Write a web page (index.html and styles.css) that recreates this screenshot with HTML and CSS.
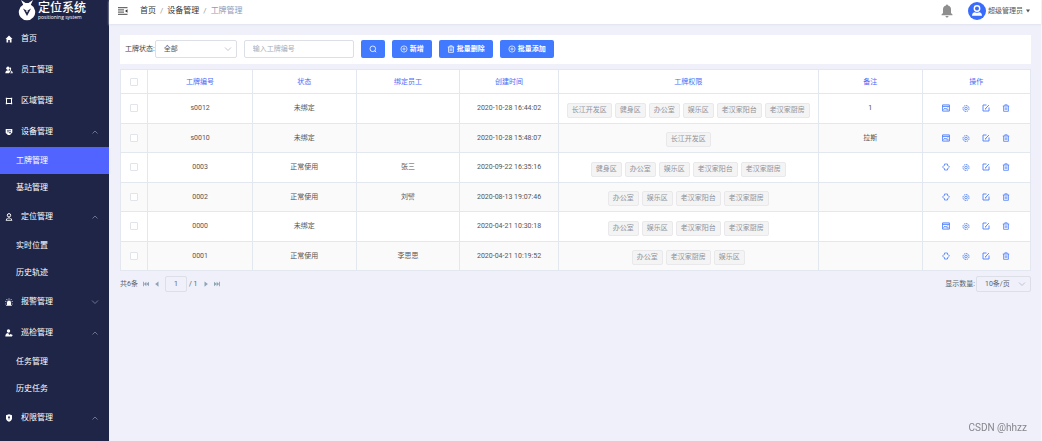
FILE: index.html
```html
<!DOCTYPE html>
<html lang="zh-CN">
<head>
<meta charset="utf-8">
<meta name="viewport" content="width=device-width, initial-scale=1">
<title>工牌管理</title>
<link rel="stylesheet" href="styles.css">
</head>
<body>
<svg class="sprite" aria-hidden="true">
  <symbol id="up" viewBox="0 0 8 8"><path d="M1.500 5.500 4 3l2.500 2.500" fill="none" stroke="currentColor" stroke-width=".8"/></symbol>
  <symbol id="down" viewBox="0 0 8 8"><path d="M1 2.500 4 5.500 7 2.500" fill="none" stroke="currentColor" stroke-width=".8"/></symbol>
  <symbol id="home" viewBox="0 0 8 8"><path d="M4 .5.500 4H1.500v3.500H3.200V5h1.600v2.500h1.700V4h1z" fill="currentColor"/></symbol>
  <symbol id="users" viewBox="0 0 8 8"><circle cx="3" cy="2.300" r="1.700" fill="currentColor"/><path d="M.3 7.300c0-2 1.200-3 2.700-3s2 .5 2.300 1.200L4 7.300zM5 1.200a1.600 1.600 0 0 1 .4 2.900L7.700 6 7 6.500 5 4.600zM5 7.300l1-1h1.700v1z" fill="currentColor"/></symbol>
  <symbol id="area" viewBox="0 0 8 8"><path d="M1.500 1.500h5v5h-5z" fill="none" stroke="currentColor"/><path d="M.8.800h1.400v1.400H.8zM5.800.800h1.400v1.400H5.800zM.8 5.800h1.400v1.400H.8zM5.800 5.800h1.400v1.400H5.800z" fill="currentColor"/></symbol>
  <symbol id="device" viewBox="0 0 8 8"><path d="M.7 1h6.600v3.500L5 7H3L.7 5z" fill="currentColor"/><path d="M2 2.400h4M2 3.800h2M5 3.400v2.200M4 4.500h2" stroke="#1f2547" stroke-width=".6"/></symbol>
  <symbol id="pin" viewBox="0 0 8 8"><circle cx="4" cy="2.300" r="1.700" fill="none" stroke="currentColor"/><path d="M4 4v2M2.500 5 1 7.300h6L5.500 5" fill="none" stroke="currentColor" stroke-width=".9"/></symbol>
  <symbol id="alarm" viewBox="0 0 8 8"><path d="M2 7V4.500a2 2 0 0 1 4 0V7h.8v.8H1.200V7z" fill="currentColor"/><path d="M4 .3v1.500M1.500 1l.8 1.200M6.500 1l-.8 1.200M.2 3.300l1.300.5M7.800 3.300l-1.300.5M.3 6h1M6.700 6h1" stroke="currentColor" stroke-width=".7"/></symbol>
  <symbol id="patrol" viewBox="0 0 8 8"><circle cx="3.500" cy="2" r="1.700" fill="currentColor"/><path d="M.3 7.500C.3 5 1.700 4 3.200 4l1 2 1.300-.9 2.200 1-.8 1.400z" fill="currentColor"/></symbol>
  <symbol id="shield" viewBox="0 0 8 8"><path d="M4 .3 7 1.300v3C7 6 5.500 7.200 4 7.800 2.500 7.200 1 6 1 4.300v-3z" fill="currentColor"/><circle cx="4" cy="3.200" r=".9" fill="#1f2547"/><path d="M4 3.500v2" stroke="#1f2547" stroke-width=".7"/></symbol>
  <symbol id="search" viewBox="0 0 8 8"><circle cx="3.800" cy="3.800" r="2.800" fill="none" stroke="currentColor" stroke-width=".8"/><path d="M5.800 5.800 7.200 7.200" stroke="currentColor" stroke-width=".8"/></symbol>
  <symbol id="plus" viewBox="0 0 8 8"><circle cx="4" cy="4" r="3.100" fill="none" stroke="currentColor" stroke-width=".7"/><path d="M4 2.400v3.200M2.400 4h3.200" stroke="currentColor" stroke-width=".7"/></symbol>
  <symbol id="trash" viewBox="0 0 8 8"><path d="M.8 2h6.400M2.800 1.800V.8h2.400v1M1.600 2v5.300h4.800V2M3.200 3.300v2.700M4.800 3.300v2.700" fill="none" stroke="currentColor" stroke-width=".8"/></symbol>
  <symbol id="card" viewBox="0 0 8 8"><path d="M.6.900h6.800v6.200H.6zM.6 2.400h6.800M1.600 5.800l1.300-1.700 1.200 1.200 1.500-1.700M4.700 5.800h1.800" fill="none" stroke="currentColor" stroke-width=".9"/></symbol>
  <symbol id="unbind" viewBox="0 0 8 8"><path d="M2.500 2.600V1h3v1.600M2.500 5.400V7h3V5.400M2.300 2.200.5 4l1.800 1.800M5.700 2.200 7.500 4 5.700 5.800" fill="none" stroke="currentColor" stroke-width=".8"/></symbol>
  <symbol id="gear" viewBox="0 0 8 8"><circle cx="4" cy="4.500" r="3" fill="none" stroke="currentColor" stroke-width=".9" stroke-dasharray="1.600 .7"/><circle cx="4" cy="4.500" r="1.300" fill="none" stroke="currentColor" stroke-width=".8"/></symbol>
  <symbol id="edit" viewBox="0 0 8 8"><path d="M4.500 1H1v6h6V3.500M3.300 4.800 6.900 1.100M3 5.100l1.300-.4" fill="none" stroke="currentColor" stroke-width=".9"/></symbol>
  <symbol id="first" viewBox="0 0 8 8"><path d="M0 1h1.200v6H0zM4.500 1v6L1.200 4zM8 1v6L4.500 4z" fill="currentColor"/></symbol>
  <symbol id="prev" viewBox="0 0 8 8"><path d="M6 .5v7L1.500 4z" fill="currentColor"/></symbol>
  <symbol id="next" viewBox="0 0 8 8"><path d="M2 .5v7L6.500 4z" fill="currentColor"/></symbol>
  <symbol id="last" viewBox="0 0 8 8"><path d="M6.800 1H8v6H6.800zM3.500 1v6l3.300-3zM0 1v6l3.500-3z" fill="currentColor"/></symbol>
</svg>

<div class="app">
  <aside class="sidebar">
    <div class="brand">
      <svg class="brand-mark" viewBox="0 0 18 21"><path d="M3 0 5.200 4.800a8.200 8.200 0 1 0 7.600 0L15 0 10.500 3h-3z" fill="#fff"/><path d="M5 8.500 9 16l4-7.500-2.500 1.500h-3z" fill="#1f2547"/><path d="M7.700 10.200 9 12.500l1.300-2.300z" fill="#fff"/></svg>
      <div class="brand-text"><strong class="brand-name">定位系统</strong><span class="brand-sub">positioning system</span></div>
    </div>
    <nav class="menu">
      <a class="item" href="#"><svg class="icon"><use href="#home"/></svg>首页</a>
      <a class="item" href="#"><svg class="icon"><use href="#users"/></svg>员工管理</a>
      <a class="item" href="#"><svg class="icon"><use href="#area"/></svg>区域管理</a>
      <a class="item" href="#"><svg class="icon"><use href="#device"/></svg>设备管理<svg class="icon arrow"><use href="#up"/></svg></a>
      <a class="sub active" href="#">工牌管理</a>
      <a class="sub" href="#">基站管理</a>
      <a class="item" href="#"><svg class="icon"><use href="#pin"/></svg>定位管理<svg class="icon arrow"><use href="#up"/></svg></a>
      <a class="sub" href="#">实时位置</a>
      <a class="sub" href="#">历史轨迹</a>
      <a class="item" href="#"><svg class="icon"><use href="#alarm"/></svg>报警管理<svg class="icon arrow"><use href="#down"/></svg></a>
      <a class="item" href="#"><svg class="icon"><use href="#patrol"/></svg>巡检管理<svg class="icon arrow"><use href="#up"/></svg></a>
      <a class="sub" href="#">任务管理</a>
      <a class="sub" href="#">历史任务</a>
      <a class="item" href="#"><svg class="icon"><use href="#shield"/></svg>权限管理<svg class="icon arrow"><use href="#up"/></svg></a>
    </nav>
  </aside>

  <div class="page">
    <header class="topbar">
      <button class="fold" aria-label="折叠菜单"><svg viewBox="0 0 10 8"><path d="M0 .7h9.500M0 2.900h6M0 5.100h6M0 7.300h9.500" stroke="#333" stroke-width=".9"/><path d="M9.500 2.200v3.600L7 4z" fill="#333"/></svg></button>
      <nav class="crumbs"><a class="crumb" href="#">首页</a><span class="slash">/</span><a class="crumb" href="#">设备管理</a><span class="slash">/</span><span class="here">工牌管理</span></nav>
      <button class="bell" aria-label="通知"><svg viewBox="0 0 12 14"><path d="M6 .5a1 1 0 0 1 1 1A4 4 0 0 1 10 5.500V9l1.500 1.500v.8H.5v-.8L2 9V5.500a4 4 0 0 1 3-4 1 1 0 0 1 1-1zM4.500 12h3a1.500 1.500 0 0 1-3 0z" fill="#8e8e8e"/></svg></button>
      <button class="user"><svg class="avatar" viewBox="0 0 18 18"><circle cx="9" cy="9" r="9" fill="#3a6cfb"/><circle cx="9" cy="6.500" r="2.700" fill="none" stroke="#fff" stroke-width="1.400"/><path d="M4 13.800c0-2.500 1.500-3.600 3-3.600 1.200.8 2.800.8 4 0 1.500 0 3 1.100 3 3.600z" fill="#fff"/></svg>超级管理员<svg class="caret" viewBox="0 0 6 6"><path d="M1 1.500h4L3 4.500z" fill="#555"/></svg></button>
    </header>

    <main class="content">
      <form class="toolbar">
        <label class="label" for="status">工牌状态:</label>
        <span class="pick pick-status"><select class="field" id="status"><option>全部</option></select><svg class="pick-arrow"><use href="#down"/></svg></span>
        <input class="field keyword" type="text" placeholder="输入工牌编号" aria-label="工牌编号">
        <button class="btn" type="button" aria-label="搜索"><svg class="icon"><use href="#search"/></svg></button>
        <button class="btn" type="button"><svg class="icon"><use href="#plus"/></svg>新增</button>
        <button class="btn" type="button"><svg class="icon"><use href="#trash"/></svg>批量删除</button>
        <button class="btn" type="button"><svg class="icon"><use href="#plus"/></svg>批量添加</button>
      </form>

      <table class="grid">
        <colgroup><col class="c-check"><col class="c-no"><col class="c-mid"><col class="c-mid"><col class="c-time"><col class="c-auth"><col class="c-mid"><col class="c-ops"></colgroup>
        <thead>
          <tr><th><input class="tick" type="checkbox" aria-label="全选"></th><th>工牌编号</th><th>状态</th><th>绑定员工</th><th>创建时间</th><th>工牌权限</th><th>备注</th><th>操作</th></tr>
        </thead>
        <tbody>
          <tr><td><input class="tick" type="checkbox" aria-label="选择 s0012"></td><td>s0012</td><td>未绑定</td><td></td><td>2020-10-28 16:44:02</td>
            <td><div class="tags"><span class="tag">长江开发区</span><span class="tag">健身区</span><span class="tag">办公室</span><span class="tag">娱乐区</span><span class="tag">老汉家阳台</span><span class="tag">老汉家厨房</span></div></td><td>1</td>
            <td><div class="ops"><button class="op" aria-label="绑定"><svg class="icon"><use href="#card"/></svg></button><button class="op" aria-label="设置"><svg class="icon"><use href="#gear"/></svg></button><button class="op" aria-label="编辑"><svg class="icon"><use href="#edit"/></svg></button><button class="op" aria-label="删除"><svg class="icon"><use href="#trash"/></svg></button></div></td></tr>
          <tr><td><input class="tick" type="checkbox" aria-label="选择 s0010"></td><td>s0010</td><td>未绑定</td><td></td><td>2020-10-28 15:48:07</td>
            <td><div class="tags"><span class="tag">长江开发区</span></div></td><td>拉斯</td>
            <td><div class="ops"><button class="op" aria-label="绑定"><svg class="icon"><use href="#card"/></svg></button><button class="op" aria-label="设置"><svg class="icon"><use href="#gear"/></svg></button><button class="op" aria-label="编辑"><svg class="icon"><use href="#edit"/></svg></button><button class="op" aria-label="删除"><svg class="icon"><use href="#trash"/></svg></button></div></td></tr>
          <tr><td><input class="tick" type="checkbox" aria-label="选择 0003"></td><td>0003</td><td>正常使用</td><td>张三</td><td>2020-09-22 16:35:16</td>
            <td><div class="tags"><span class="tag">健身区</span><span class="tag">办公室</span><span class="tag">娱乐区</span><span class="tag">老汉家阳台</span><span class="tag">老汉家厨房</span></div></td><td></td>
            <td><div class="ops"><button class="op" aria-label="解绑"><svg class="icon"><use href="#unbind"/></svg></button><button class="op" aria-label="设置"><svg class="icon"><use href="#gear"/></svg></button><button class="op" aria-label="编辑"><svg class="icon"><use href="#edit"/></svg></button><button class="op" aria-label="删除"><svg class="icon"><use href="#trash"/></svg></button></div></td></tr>
          <tr><td><input class="tick" type="checkbox" aria-label="选择 0002"></td><td>0002</td><td>正常使用</td><td>刘譬</td><td>2020-08-13 19:07:46</td>
            <td><div class="tags"><span class="tag">办公室</span><span class="tag">娱乐区</span><span class="tag">老汉家阳台</span><span class="tag">老汉家厨房</span></div></td><td></td>
            <td><div class="ops"><button class="op" aria-label="解绑"><svg class="icon"><use href="#unbind"/></svg></button><button class="op" aria-label="设置"><svg class="icon"><use href="#gear"/></svg></button><button class="op" aria-label="编辑"><svg class="icon"><use href="#edit"/></svg></button><button class="op" aria-label="删除"><svg class="icon"><use href="#trash"/></svg></button></div></td></tr>
          <tr><td><input class="tick" type="checkbox" aria-label="选择 0000"></td><td>0000</td><td>未绑定</td><td></td><td>2020-04-21 10:30:18</td>
            <td><div class="tags"><span class="tag">办公室</span><span class="tag">娱乐区</span><span class="tag">老汉家阳台</span><span class="tag">老汉家厨房</span></div></td><td></td>
            <td><div class="ops"><button class="op" aria-label="绑定"><svg class="icon"><use href="#card"/></svg></button><button class="op" aria-label="设置"><svg class="icon"><use href="#gear"/></svg></button><button class="op" aria-label="编辑"><svg class="icon"><use href="#edit"/></svg></button><button class="op" aria-label="删除"><svg class="icon"><use href="#trash"/></svg></button></div></td></tr>
          <tr><td><input class="tick" type="checkbox" aria-label="选择 0001"></td><td>0001</td><td>正常使用</td><td>李思思</td><td>2020-04-21 10:19:52</td>
            <td><div class="tags"><span class="tag">办公室</span><span class="tag">老汉家厨房</span><span class="tag">娱乐区</span></div></td><td></td>
            <td><div class="ops"><button class="op" aria-label="解绑"><svg class="icon"><use href="#unbind"/></svg></button><button class="op" aria-label="设置"><svg class="icon"><use href="#gear"/></svg></button><button class="op" aria-label="编辑"><svg class="icon"><use href="#edit"/></svg></button><button class="op" aria-label="删除"><svg class="icon"><use href="#trash"/></svg></button></div></td></tr>
        </tbody>
      </table>

      <footer class="pager">
        <span>共6条</span>
        <button class="jump" aria-label="首页"><svg class="icon"><use href="#first"/></svg></button>
        <button class="jump" aria-label="上一页"><svg class="icon"><use href="#prev"/></svg></button>
        <span class="where"><input class="field page-no" type="text" value="1" aria-label="页码">/ 1</span>
        <button class="jump" aria-label="下一页"><svg class="icon"><use href="#next"/></svg></button>
        <button class="jump" aria-label="末页"><svg class="icon"><use href="#last"/></svg></button>
        <label class="size-label" for="size">显示数量:</label>
        <span class="pick pick-size"><select class="field" id="size"><option>10条/页</option></select><svg class="pick-arrow"><use href="#down"/></svg></span>
      </footer>
    </main>
  </div>
</div>
<div class="watermark">CSDN @hhzz</div>
</body>
</html>
```
FILE: styles.css
```css
* { box-sizing: border-box; }
body {
  margin: 0;
  background: #eff0fa;
  color: #555;
  font: 7px/10px Roboto, "Noto Sans CJK SC", sans-serif;
}
button, input, select { font: inherit; color: inherit; margin: 0; }
button { border: 0; padding: 0; background: none; cursor: pointer; }
a { color: inherit; text-decoration: none; }
svg { display: block; flex: none; }
.sprite { position: absolute; width: 0; height: 0; }
.icon { width: 8px; height: 8px; }

.app { display: flex; min-height: 100vh; }
.sidebar { flex: none; width: 109px; background: #1f2547; color: #fff; }
.brand { display: flex; gap: 2px; height: 23px; padding-left: 18px; }
.brand-mark { width: 18px; height: 21px; }
.brand-text { display: flex; flex-direction: column; padding-top: 1px; }
.brand-name { font-size: 12px; line-height: 14px; font-weight: 500; }
.brand-sub { font-family: "Open Sans", sans-serif; font-size: 5px; line-height: 5px; white-space: nowrap; }
.item, .sub { display: flex; align-items: center; font-size: 8px; }
.item { height: 31px; padding: 0 10px 0 5px; gap: 8px; }
.sub { height: 27px; padding-left: 16px; }
.active { background: #5264ff; }
.arrow { margin-left: auto; color: #8087a0; }

.page { flex: 1; min-width: 0; border-right: 1px solid #f5f5fb; }
.topbar { display: flex; align-items: center; height: 24px; padding: 0 10px 3px 9px; background: #fff; box-shadow: 0 1px 2px #dfe3ee; }
.fold svg { width: 10px; height: 8px; }
.crumbs { display: flex; gap: 4px; margin: 0 auto 0 12px; font-size: 8px; color: #333; }
.slash { color: #999; }
.here { color: #8f9bb8; }
.bell svg { width: 12px; height: 14px; }
.user { display: flex; align-items: center; gap: 2px; margin-left: 15px; }
.avatar { width: 18px; height: 18px; }
.caret { width: 6px; height: 6px; }

.content { display: flex; flex-direction: column; padding: 11px 10px 11px 11px; }
.toolbar { display: flex; align-items: center; gap: 7px; height: 29px; padding: 0 5px 1px; background: #fff; }
.label { margin-right: -7px; color: #444; white-space: nowrap; }
.pick { position: relative; display: block; }
.pick-status { width: 82px; }
.pick-size { width: 55px; }
.pick-arrow { position: absolute; right: 5px; top: 50%; width: 8px; height: 8px; margin-top: -4px; color: #b3b9c6; pointer-events: none; }
.field { display: block; width: 100%; height: 18px; padding: 0 8px; border: 1px solid #dcdfe6; border-radius: 2px; background: #fff; outline: 0; appearance: none; }
.keyword { width: 110px; }
.keyword::placeholder { color: #a9adb8; }
.btn { display: flex; align-items: center; gap: 2px; height: 18px; padding: 0 8px; border-radius: 2px; background: #4179ff; color: #fff; font-weight: 700; white-space: nowrap; }

.grid { width: 100%; margin-top: 5px; border-collapse: collapse; table-layout: fixed; background: #fff; text-align: center; }
.c-check { width: 3%; }
.c-no { width: 11.500%; }
.c-mid { width: 11.400%; }
.c-time { width: 10.800%; }
.c-auth { width: 28.600%; }
.c-ops { width: 11.900%; }
.grid th, .grid td { height: 30px; padding: 0; border: 1px solid #e3e7ef; vertical-align: middle; }
.grid td { padding-bottom: 1px; }
.grid th { height: 24px; color: #4a6cf7; font-weight: 400; }
.grid tbody tr:nth-child(even) { background: #fafafa; }
.grid tbody tr:nth-child(even) td { height: 29px; }
.tick { display: block; width: 8px; height: 8px; margin: 0 auto; border: 1px solid #e1e4ea; border-radius: 1px; background: #fff; appearance: none; }
.tags { display: flex; justify-content: center; gap: 3px; padding-top: 4px; }
.tag { height: 15px; padding: 0 4px; border: 1px solid #e9e9eb; border-radius: 2px; background: #f4f4f5; color: #909399; line-height: 13px; white-space: nowrap; }
.ops { display: flex; justify-content: center; gap: 12px; }
.op { color: #4a7dff; }

.pager { display: flex; align-items: center; gap: 5px; margin-top: 5px; color: #606266; }
.pager .field { height: 16px; background: transparent; }
.jump { color: #8fa3b5; }
.jump .icon { width: 6px; height: 6px; }
.where { display: flex; align-items: center; gap: 2px; }
.where .page-no { width: 22px; padding: 0; text-align: center; }
.size-label { margin: 0 -4px 0 auto; }

.watermark { position: fixed; right: 15px; bottom: 7px; color: #85868c; font-size: 10px; line-height: 12px; }
```
